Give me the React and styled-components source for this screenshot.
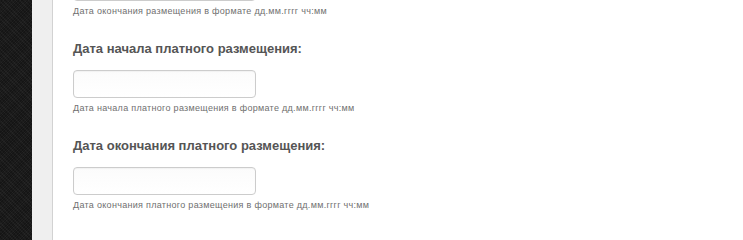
import React from "react";
import styled, { createGlobalStyle } from "styled-components";

const Global = createGlobalStyle`
  html, body { margin: 0; padding: 0; }
  body { font-family: "Liberation Sans", Arial, sans-serif; background: #fff; overflow: hidden; }
`;

const Page = styled.div`
  display: flex;
  min-height: 100vh;
  overflow: hidden;
`;

const DarkSide = styled.div`
  width: 32px;
  flex: none;
  background-color: #1c1c1c;
  background-image:
    repeating-linear-gradient(45deg, rgba(255,255,255,0.035) 0 1px, transparent 1px 3px),
    repeating-linear-gradient(-45deg, rgba(0,0,0,0.25) 0 1px, transparent 1px 2px);
`;

const Rail = styled.div`
  width: 20px;
  flex: none;
  background: #efefef;
  border-right: 1px solid #d2d2d2;
`;

const Content = styled.div`
  flex: 1;
  background: #fff;
  padding-left: 20px;
`;

const Form = styled.div`
  display: flex;
  flex-direction: column;
  margin-top: -27px;
`;

const Field = styled.div`
  display: flex;
  flex-direction: column;
  align-items: flex-start;
  & + & { margin-top: 23px; }
`;

const Label = styled.label`
  font-size: 13px;
  line-height: 18px;
  font-weight: bold;
  color: #555;
  margin-bottom: 12px;
`;

const Input = styled.input`
  box-sizing: border-box;
  width: 183px;
  height: 28px;
  margin: 0;
  padding: 4px 6px;
  border: 1px solid #ccc;
  border-radius: 4px;
  background: linear-gradient(#fbfbfb, #fff);
  box-shadow: inset 0 1px 1px rgba(0, 0, 0, 0.04);
  outline: none;
`;

const Hint = styled.span`
  margin-top: 4px;
  font-size: 9px;
  line-height: 12px;
  letter-spacing: 0.3px;
  color: #6f6f6f;
  white-space: nowrap;
`;

const fields = [
  { label: null, hint: "Дата окончания размещения в формате дд.мм.гггг чч:мм" },
  { label: "Дата начала платного размещения:", hint: "Дата начала платного размещения в формате дд.мм.гггг чч:мм" },
  { label: "Дата окончания платного размещения:", hint: "Дата окончания платного размещения в формате дд.мм.гггг чч:мм" },
];

export default function App() {
  return (
    <>
      <Global />
      <Page>
        <DarkSide />
        <Rail />
        <Content>
          <Form>
            {fields.map((f, i) => (
              <Field key={i}>
                {f.label && <Label>{f.label}</Label>}
                <Input type="text" />
                <Hint>{f.hint}</Hint>
              </Field>
            ))}
          </Form>
        </Content>
      </Page>
    </>
  );
}
